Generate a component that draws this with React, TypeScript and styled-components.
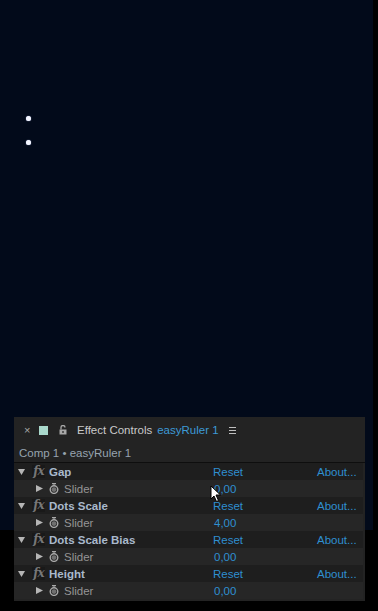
import React from "react";
import styled, { createGlobalStyle } from "styled-components";

const Global = createGlobalStyle`
  html, body { margin: 0; padding: 0; background: #000; }
  body { width: 378px; height: 611px; overflow: hidden; font-family: "Liberation Sans", Arial, sans-serif; }
`;

const Stage = styled.div`
  display: grid;
  grid-template-columns: 14px 351px 8px 5px;
  grid-template-rows: 417px 113px 71px 10px;
  width: 378px;
  height: 611px;
  background: #000;
`;

const Viewer = styled.div`
  grid-column: 1 / 4;
  grid-row: 1 / 3;
  background: #020a1a;
  position: relative;
`;

const Dot = styled.div<{ $x: number; $y: number }>`
  position: absolute;
  left: ${(p) => p.$x - 2}px;
  top: ${(p) => p.$y - 2}px;
  width: 5px;
  height: 5px;
  border-radius: 50%;
  background: #f4f6ff;
  box-shadow: 0 0 1px #c8d0ff;
`;

const Panel = styled.div`
  grid-column: 2 / 3;
  grid-row: 2 / 4;
  z-index: 1;
  background: #232323;
  display: flex;
  flex-direction: column;
  position: relative;
  font-size: 11.5px;
`;

const TabBar = styled.div`
  height: 26px;
  display: flex;
  align-items: center;
  padding-left: 10px;
  color: #c6c6c6;
`;

const Close = styled.span`
  color: #a8a8a8;
  font-size: 11px;
  width: 9px;
  margin-right: 6px;
`;

const Swatch = styled.span`
  width: 9px;
  height: 9px;
  background: #a9d8cb;
  margin-right: 11px;
`;

const LockIcon = styled.svg`
  width: 8px;
  height: 10px;
  margin-right: 10px;
`;

const Title = styled.span`
  color: #c9c9c9;
  margin-right: 5px;
`;

const TitleLayer = styled.span`
  color: #3d9ad6;
  margin-right: 10px;
`;

const Menu = styled.svg`
  width: 7px;
  height: 7px;
`;

const Breadcrumb = styled.div`
  height: 20px;
  display: flex;
  align-items: center;
  padding-left: 5px;
  padding-top: 1px;
  box-sizing: border-box;
  color: #97a3b0;
  border-bottom: 1px solid #0e0e0e;
`;

const Row = styled.div<{ $kind: "fx" | "param" }>`
  height: 17px;
  display: grid;
  grid-template-columns: 199px 104px 1fr;
  align-items: center;
  margin-right: 2px;
  background: ${(p) => (p.$kind === "fx" ? "#1e1e1e" : "#262626")};
`;

const NameCell = styled.div<{ $indent: number }>`
  display: flex;
  align-items: center;
  padding-left: ${(p) => p.$indent}px;
`;

const Twirl = styled.svg`
  width: 7px;
  height: 7px;
  flex: none;
`;

const Fx = styled.span`
  font-family: "DejaVu Serif", "Liberation Serif", serif;
  font-style: italic;
  font-weight: bold;
  font-size: 12px;
  color: #777;
  background: #191919;
  width: 13px;
  height: 13px;
  line-height: 12px;
  text-align: center;
  margin-left: 7px;
  margin-right: 4px;
  letter-spacing: -1px;
`;

const EffectName = styled.span`
  font-weight: bold;
  color: #a9b9cc;
`;

const Watch = styled.svg`
  width: 10px;
  height: 11px;
  margin-left: 6px;
  margin-right: 5px;
  flex: none;
`;

const ParamName = styled.span`
  color: #959595;
`;

const Link = styled.span`
  color: #2f8fd0;
`;

const Value = styled.span`
  color: #2f8fd0;
  padding-left: 1px;
`;

const Cursor = styled.svg`
  position: absolute;
  left: 196px;
  top: 68px;
  width: 12px;
  height: 18px;
`;

type Effect = { name: string; value: string };

const effects: Effect[] = [
  { name: "Gap", value: "0,00" },
  { name: "Dots Scale", value: "4,00" },
  { name: "Dots Scale Bias", value: "0,00" },
  { name: "Height", value: "0,00" },
];

const Down = () => (
  <Twirl viewBox="0 0 7 7">
    <path d="M0 1 L7 1 L3.5 7 Z" fill="#b5b5b5" />
  </Twirl>
);

const Right = () => (
  <Twirl viewBox="0 0 7 7">
    <path d="M0 0 L7 3.5 L0 7 Z" fill="#b5b5b5" />
  </Twirl>
);

const Stopwatch = () => (
  <Watch viewBox="0 0 10 11">
    <rect x="3" y="0" width="4" height="1.2" fill="#a8a8a8" />
    <rect x="4.5" y="1" width="1" height="1.5" fill="#a8a8a8" />
    <circle cx="5" cy="6.6" r="3.8" fill="none" stroke="#a8a8a8" strokeWidth="1.4" />
    <circle cx="5" cy="6.6" r="2.4" fill="#707070" />
  </Watch>
);

export default function App() {
  return (
    <>
      <Global />
      <Stage>
        <Viewer>
          <Dot $x={28} $y={118} />
          <Dot $x={28} $y={142} />
        </Viewer>
        <Panel>
          <TabBar>
            <Close>×</Close>
            <Swatch />
            <LockIcon viewBox="0 0 8 10">
              <path d="M2 4.5 V2.5 A2 2 0 0 1 6 2.5" fill="none" stroke="#a8a8a8" strokeWidth="1.3" />
              <rect x="0.5" y="4.5" width="7" height="5" fill="#a8a8a8" />
              <rect x="3.4" y="6" width="1.2" height="2" fill="#232323" />
            </LockIcon>
            <Title>Effect Controls</Title>
            <TitleLayer>easyRuler 1</TitleLayer>
            <Menu viewBox="0 0 7 7">
              <rect x="0" y="0" width="7" height="1" fill="#c0c0c0" />
              <rect x="0" y="3" width="7" height="1" fill="#c0c0c0" />
              <rect x="0" y="6" width="7" height="1" fill="#c0c0c0" />
            </Menu>
          </TabBar>
          <Breadcrumb>Comp 1 • easyRuler 1</Breadcrumb>
          {effects.map((e) => (
            <React.Fragment key={e.name}>
              <Row $kind="fx">
                <NameCell $indent={4}>
                  <Down />
                  <Fx>fx</Fx>
                  <EffectName>{e.name}</EffectName>
                </NameCell>
                <Link>Reset</Link>
                <Link>About...</Link>
              </Row>
              <Row $kind="param">
                <NameCell $indent={22}>
                  <Right />
                  <Stopwatch />
                  <ParamName>Slider</ParamName>
                </NameCell>
                <Value>{e.value}</Value>
                <span />
              </Row>
            </React.Fragment>
          ))}
          <Cursor viewBox="0 0 12 18">
            <path d="M1 1 L1 14 L4 11 L6.5 16.5 L8.5 15.5 L6 10 L10.5 10 Z" fill="#fff" stroke="#000" strokeWidth="1" />
          </Cursor>
        </Panel>
      </Stage>
    </>
  );
}
